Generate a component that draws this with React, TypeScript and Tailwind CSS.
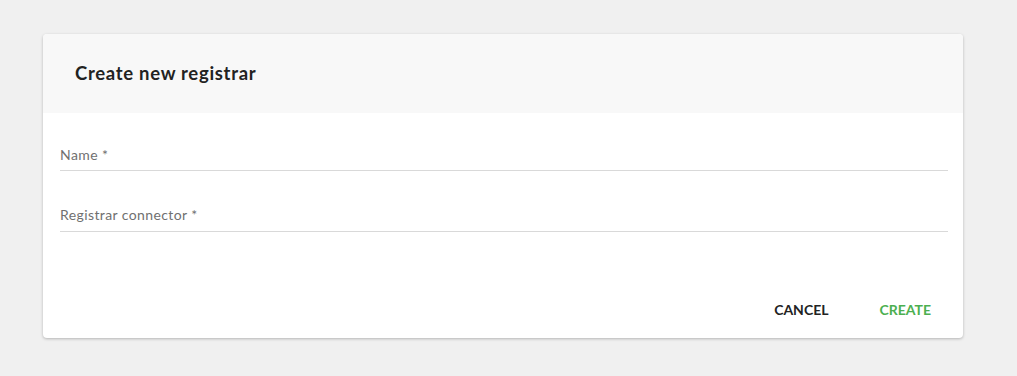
export default function App() {
  return (
    <div className="min-h-[376px] w-full bg-[#f0f0f0] pt-[34px] pl-[43px]" style={{ fontFamily: "Lato, 'Open Sans', sans-serif" }}>
      <div className="w-[920px] h-[304px] bg-white rounded-[4px] shadow-[0_1px_3px_rgba(0,0,0,0.25)] overflow-hidden flex flex-col">
        <div className="h-[79px] bg-[#f8f8f8] flex items-center pl-[32px]">
          <h1 className="text-[18.5px] font-bold text-[#222] leading-none tracking-[0.7px]">Create new registrar</h1>
        </div>
        <div className="pl-[17px] pr-[15px] pt-[34px]">
          <div className="border-b border-[#d9d9d9] h-[24px] text-[14px] text-[#707070] leading-[16px] tracking-[0.4px]">Name *</div>
          <div className="mt-[36px] border-b border-[#d9d9d9] h-[25px] text-[14px] text-[#707070] leading-[16px] tracking-[0.4px]">Registrar connector *</div>
        </div>
        <div className="flex justify-end items-center mt-auto mb-[21px] pr-[32px] gap-[51px]">
          <button className="text-[14px] font-bold text-[#222] uppercase leading-none">Cancel</button>
          <button className="text-[14px] font-bold text-[#4caf50] uppercase leading-none">Create</button>
        </div>
      </div>
    </div>
  );
}
